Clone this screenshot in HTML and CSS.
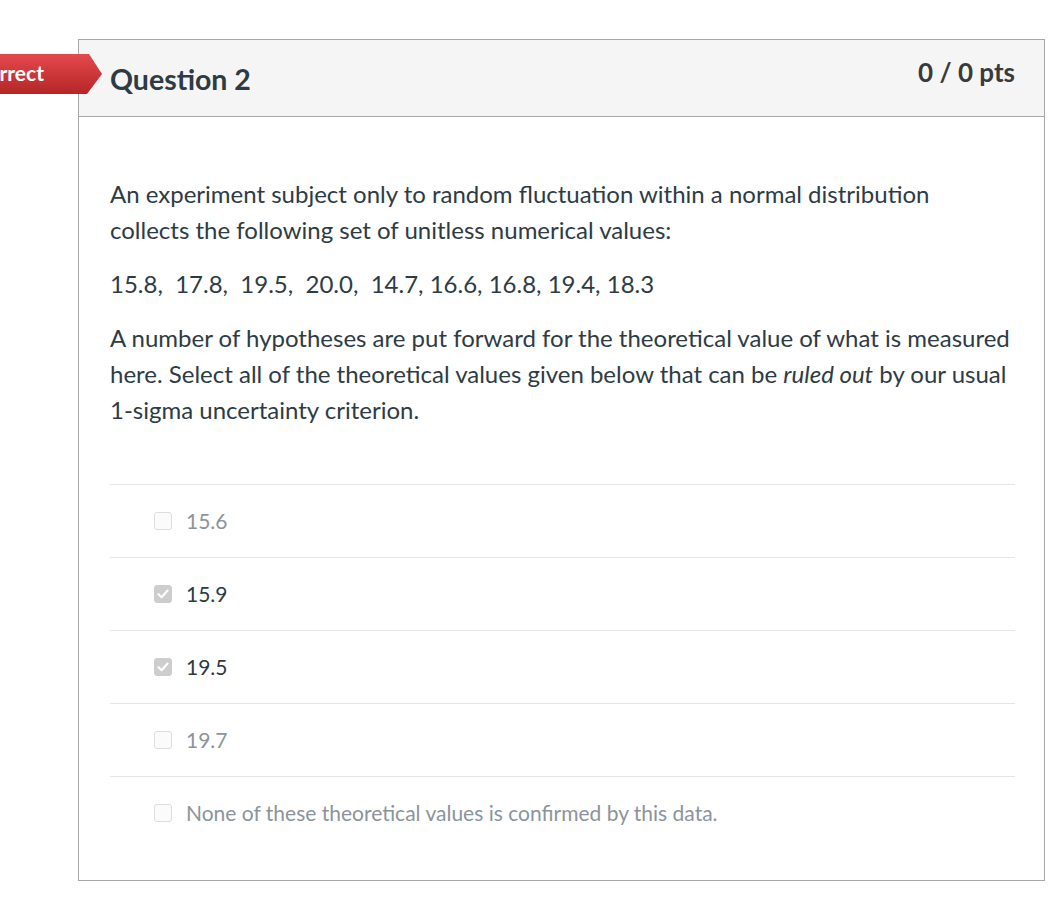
FILE: index.html
```html
<!DOCTYPE html>
<html>
<head>
<meta charset="utf-8">
<link rel="stylesheet" href="styles.css">
</head>
<body>
<div class="question">
  <div class="badge"><span>Incorrect</span></div>
  <div class="header">
    <span class="title">Question 2</span>
    <span class="pts">0 / 0 pts</span>
  </div>
  <div class="content">
    <p>An experiment subject only to random fluctuation within a normal distribution collects the following set of unitless numerical values:</p>
    <p>15.8,&nbsp; 17.8,&nbsp; 19.5,&nbsp; 20.0,&nbsp; 14.7, 16.6, 16.8, 19.4, 18.3</p>
    <p>A number of hypotheses are put forward for the theoretical value of what is measured here. Select all of the theoretical values given below that can be <em>ruled out</em> by our usual 1-sigma uncertainty criterion.</p>
  </div>
  <div class="answers">
    <div class="answer"><span class="box"></span><span class="label">15.6</span></div>
    <div class="answer selected"><span class="box"><svg viewBox="0 0 18 18" width="18" height="18"><path d="M4.5 9.2 L7.6 12.2 L13.6 5.6" fill="none" stroke="#fff" stroke-width="2.2" stroke-linecap="round" stroke-linejoin="round"/></svg></span><span class="label">15.9</span></div>
    <div class="answer selected"><span class="box"><svg viewBox="0 0 18 18" width="18" height="18"><path d="M4.5 9.2 L7.6 12.2 L13.6 5.6" fill="none" stroke="#fff" stroke-width="2.2" stroke-linecap="round" stroke-linejoin="round"/></svg></span><span class="label">19.5</span></div>
    <div class="answer"><span class="box"></span><span class="label">19.7</span></div>
    <div class="answer"><span class="box"></span><span class="label">None of these theoretical values is confirmed by this data.</span></div>
  </div>
</div>
</body>
</html>
```
FILE: styles.css
```css
html, body {
  margin: 0;
  padding: 0;
  background: #fff;
}
body {
  font-family: Lato, "Open Sans", sans-serif;
  color: #2d3b45;
  overflow: hidden;
}
.question {
  position: relative;
  margin: 39px 0 0 78px;
  width: 965px;
  border: 1px solid #a8a8a8;
  box-sizing: content-box;
}
.badge {
  position: absolute;
  top: 14px;
  left: -121px;
  width: 144px;
  height: 40px;
  background: linear-gradient(#e5494d, #b42626);
  clip-path: polygon(0 0, calc(100% - 13px) 0, 100% 50%, calc(100% - 15px) 100%, 0 100%);
  display: flex;
  align-items: center;
  justify-content: flex-end;
  padding-right: 58px;
  padding-bottom: 3px;
  box-sizing: border-box;
  color: #fff;
  font-weight: 700;
  font-size: 21px;
}
.header {
  height: 76px;
  background: #f5f5f5;
  border-bottom: 1px solid #a8a8a8;
  display: flex;
  justify-content: space-between;
  align-items: flex-start;
  padding: 0 29px 0 31px;
}
.title {
  font-size: 28.5px;
  font-weight: 700;
  margin-top: 22px;
}
.pts {
  font-size: 26px;
  font-weight: 700;
  margin-top: 16px;
  color: #3a3a3a;
}
.content {
  padding: 59px 31px 0 31px;
  font-size: 24px;
  line-height: 36px;
}
.content p {
  margin: 0 0 18px;
}
.answers {
  margin: 56px 29px 31px 31px;
}
.answer {
  height: 72px;
  border-top: 1px solid #e6e6e6;
  display: flex;
  align-items: center;
  padding-left: 44px;
  padding-bottom: 1px;
  box-sizing: border-box;
  height: 73px;
  font-size: 21px;
  color: #8b949b;
}
.answer.selected {
  color: #2d3b45;
}
.box {
  width: 18px;
  height: 18px;
  box-sizing: border-box;
  border: 1px solid #dedede;
  border-radius: 3px;
  background: #fbfbfb;
  margin-right: 14px;
  display: flex;
}
.answer.selected .box {
  background: #cdcdcd;
  border-color: #cdcdcd;
}
.box svg {
  margin: -1px;
}
```
